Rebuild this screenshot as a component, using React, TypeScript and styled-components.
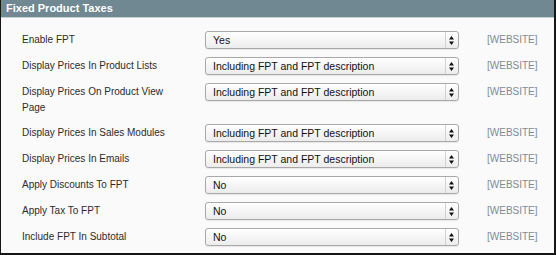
import React from 'react';
import styled, { createGlobalStyle } from 'styled-components';

const GlobalStyle = createGlobalStyle`
  html, body { margin: 0; padding: 0; background: #fff; }
  body { font-family: "Liberation Sans", Arial, Helvetica, sans-serif; }
`;

const ROWS = [
  { label: 'Enable FPT', value: 'Yes' },
  { label: 'Display Prices In Product Lists', value: 'Including FPT and FPT description' },
  { label: 'Display Prices On Product View Page', value: 'Including FPT and FPT description' },
  { label: 'Display Prices In Sales Modules', value: 'Including FPT and FPT description' },
  { label: 'Display Prices In Emails', value: 'Including FPT and FPT description' },
  { label: 'Apply Discounts To FPT', value: 'No' },
  { label: 'Apply Tax To FPT', value: 'No' },
  { label: 'Include FPT In Subtotal', value: 'No' },
];

const Frame = styled.div`
  width: 556px;
  height: 255px;
  box-sizing: border-box;
  border-left: 1px solid #161616;
  border-right: 2px solid #161616;
  border-bottom: 2px solid #161616;
  background: #fafafa;
  overflow: hidden;
`;

const Header = styled.div`
  height: 17px;
  background: #6f8891;
  border-bottom: 1px solid #c8d1d4;
  color: #fff;
  font-size: 11px;
  font-weight: bold;
  line-height: 17px;
  padding-left: 5px;
`;

const List = styled.div`
  display: flex;
  flex-direction: column;
  padding: 9px 0 0 21px;
`;

const Row = styled.div`
  display: grid;
  grid-template-columns: 183px 254px auto;
  align-items: start;
  padding: 4px 0;
`;

const Label = styled.div`
  font-size: 10px;
  line-height: 16px;
  padding-top: 1px;
  padding-right: 28px;
  color: #2b2b2b;
`;

const Select = styled.div`
  height: 18px;
  box-sizing: border-box;
  border: 1px solid #a9a9a9;
  border-radius: 3px;
  background: linear-gradient(#ffffff, #ececec);
  box-shadow: 0 1px 1px rgba(0, 0, 0, 0.08);
  display: flex;
  align-items: center;
  font-size: 10.5px;
  color: #111;
`;

const SelectText = styled.span`
  flex: 1;
  padding-left: 7px;
  white-space: nowrap;
`;

const Arrow = styled.span`
  width: 11px;
  height: 16px;
  border-left: 1px solid #d2d2d2;
  display: flex;
  align-items: center;
  justify-content: center;
  margin-right: 1px;
`;

const Scope = styled.div`
  margin-left: 28px;
  font-size: 10px;
  line-height: 18px;
  color: #7d8b98;
`;

const Arrows = () => (
  <svg width="5" height="9" viewBox="0 0 5 9">
    <path d="M2.5 0 L5 3.5 H0 Z M2.5 9 L5 5.5 H0 Z" fill="#111" />
  </svg>
);

const App = () => (
  <>
    <GlobalStyle />
    <Frame>
      <Header>Fixed Product Taxes</Header>
      <List>
        {ROWS.map(r => (
          <Row key={r.label}>
            <Label>{r.label}</Label>
            <Select>
              <SelectText>{r.value}</SelectText>
              <Arrow><Arrows /></Arrow>
            </Select>
            <Scope>[WEBSITE]</Scope>
          </Row>
        ))}
      </List>
    </Frame>
  </>
);

export default App;
